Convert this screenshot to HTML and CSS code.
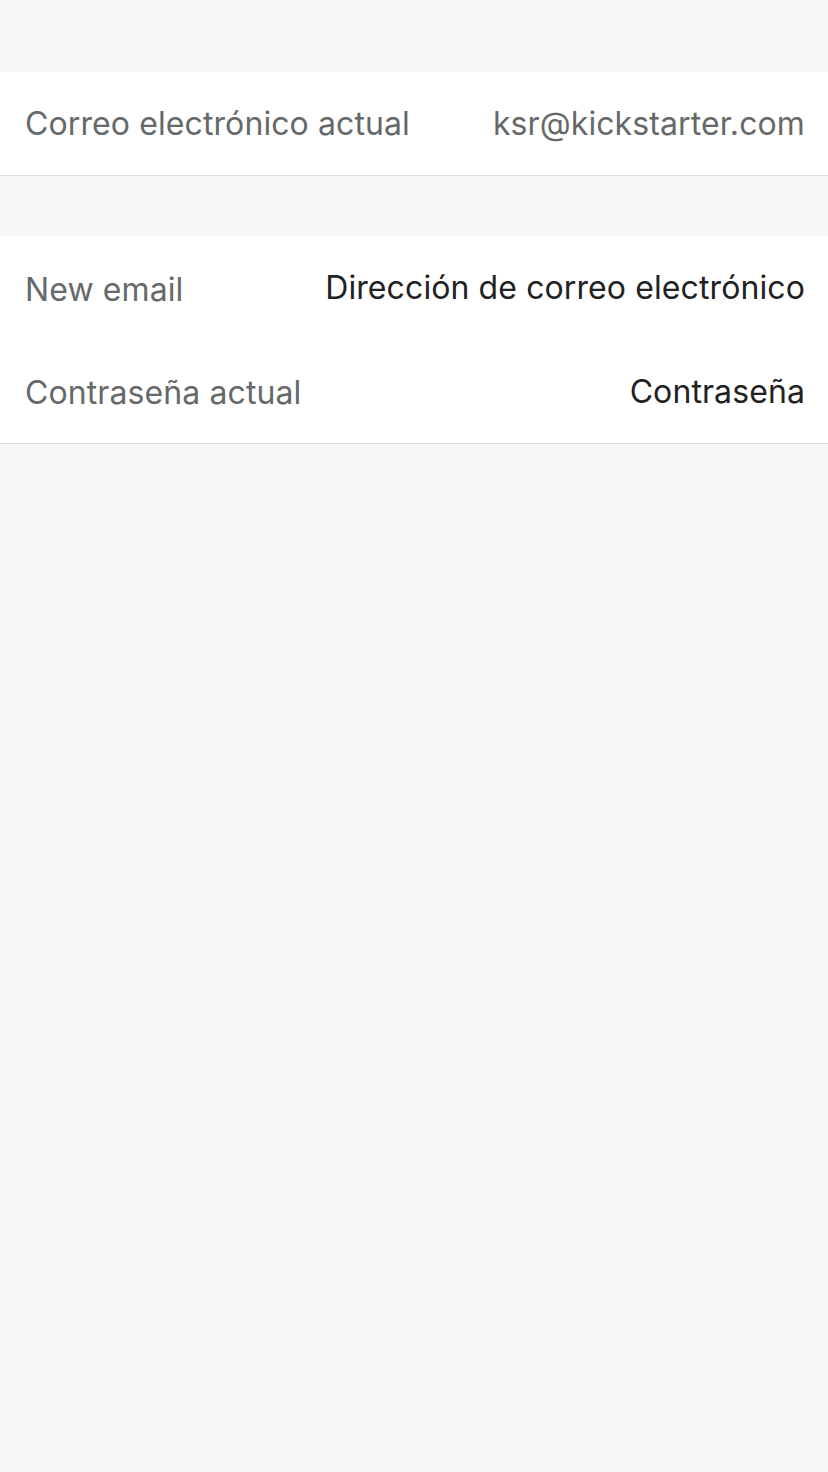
FILE: index.html
```html
<!DOCTYPE html>
<html lang="es">
<head>
<meta charset="utf-8">
<link rel="stylesheet" href="styles.css">
</head>
<body>
<div class="screen">
  <section class="group group-first">
    <div class="row">
      <span class="label">Correo electrónico actual</span>
      <span class="value">ksr@kickstarter.com</span>
    </div>
  </section>
  <section class="group group-second">
    <div class="row row-new">
      <span class="label">New email</span>
      <span class="field">Dirección de correo electrónico</span>
    </div>
    <div class="row row-pass">
      <span class="label">Contraseña actual</span>
      <span class="field">Contraseña</span>
    </div>
  </section>
</div>
</body>
</html>
```
FILE: styles.css
```css
html, body {
  margin: 0;
  padding: 0;
  background: #f6f6f4;
}
.screen {
  width: 828px;
  height: 1472px;
  padding-top: 72px;
  box-sizing: border-box;
  font-family: Inter, "Noto Sans", sans-serif;
  font-size: 32px;
  letter-spacing: 0.1px;
}
.group {
  background: #ffffff;
  border-bottom: 1px solid #dcdcdc;
}
.group-second {
  margin-top: 60px;
}
.row {
  height: 103px;
  display: flex;
  align-items: center;
  justify-content: space-between;
  padding: 0 23px 0 25px;
}
.row-pass {
  height: 104px;
}
.group-second .label {
  padding-top: 3px;
}
.label {
  color: #656969;
}
.value {
  color: #656969;
}
.field {
  color: #222222;
}
```
